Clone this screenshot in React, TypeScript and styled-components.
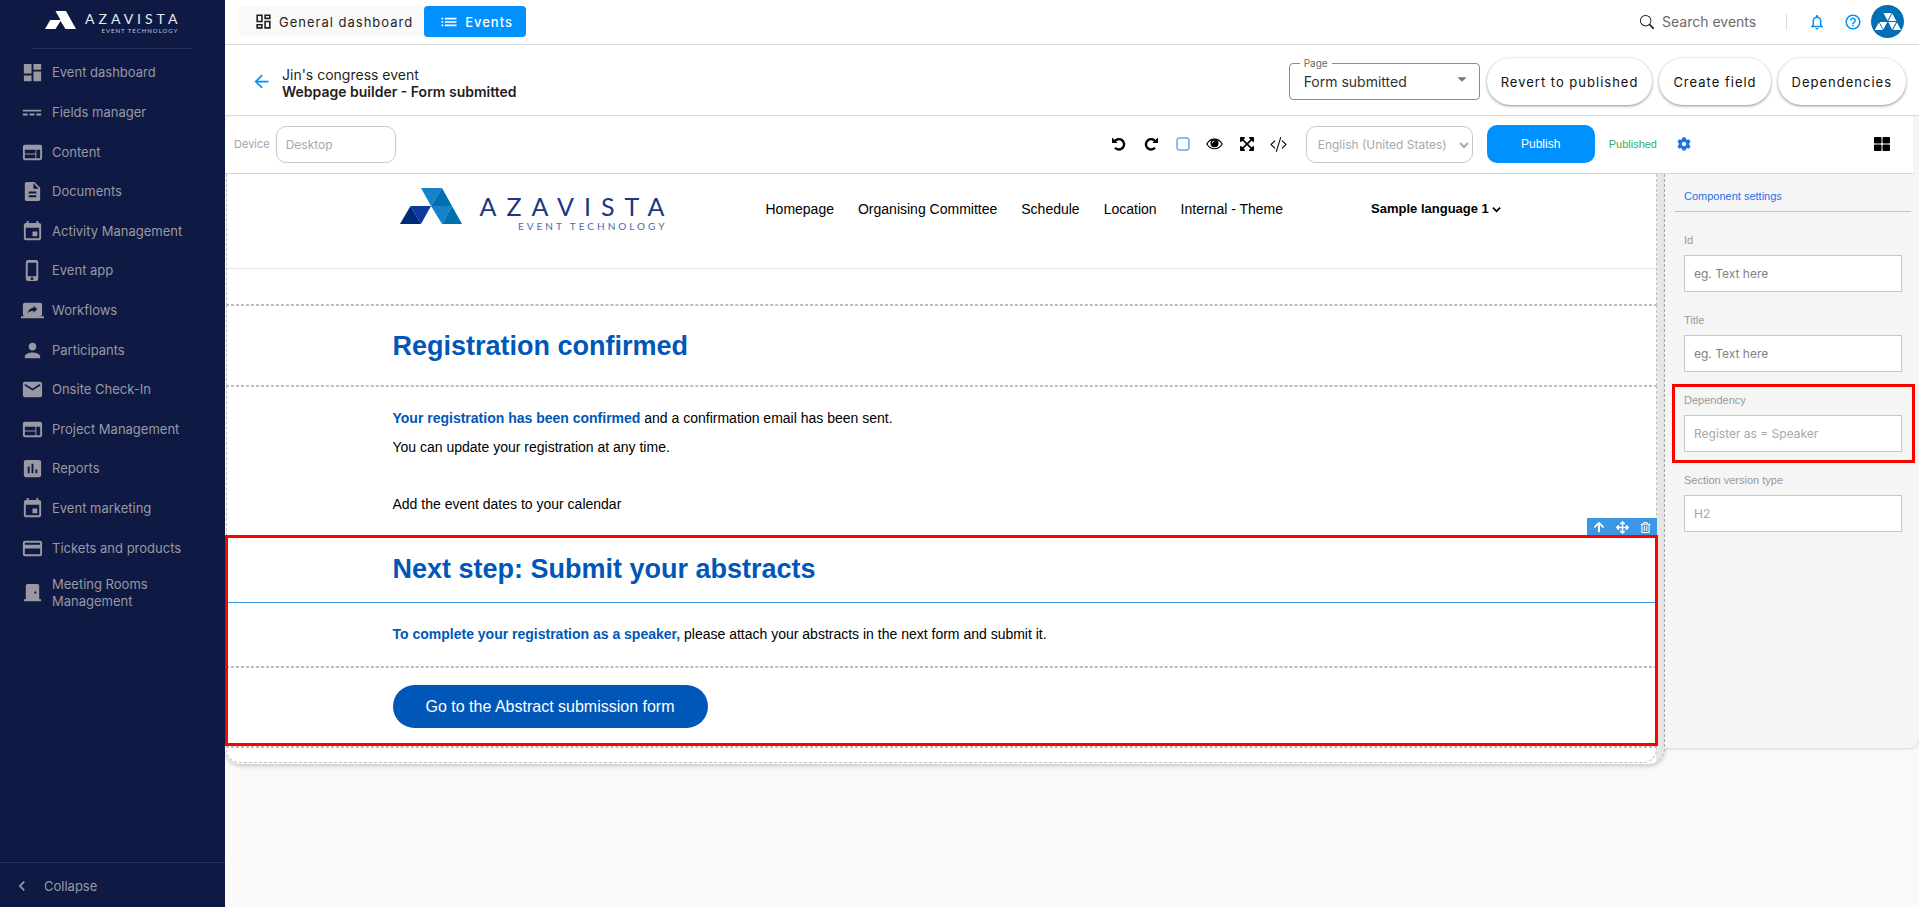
import React from 'react';
import styled, { createGlobalStyle } from 'styled-components';
import {
  MdDashboard,
  MdPowerInput,
  MdWeb,
  MdDescription,
  MdEvent,
  MdPhoneIphone,
  MdScreenShare,
  MdPerson,
  MdEmail,
  MdAssessment,
  MdCreditCard,
  MdChevronLeft,
  MdOutlineDashboard,
  MdList,
  MdArrowBack,
  MdArrowDropDown,
  MdNotificationsNone,
  MdHelpOutline,
} from 'react-icons/md';
import { FaCog, FaThLarge, FaArrowUp, FaArrowsAlt, FaExpandArrowsAlt, FaRegTrashAlt } from 'react-icons/fa';
import { BsSearch, BsCodeSlash } from 'react-icons/bs';

const GlobalStyle = createGlobalStyle`
  * { box-sizing: border-box; }
  body {
    margin: 0;
    background: #f9f9f9;
    font-family: Inter, "Liberation Sans", sans-serif;
    color: #1f1f1f;
  }
  button, input, select { font: inherit; color: inherit; margin: 0; }
  h2, p, ul { margin: 0; padding: 0; }
  a { color: inherit; text-decoration: none; }
  svg { display: block; flex: none; }
`;

const Shell = styled.div`
  display: flex;
  min-height: 100vh;
`;

/* Sidebar */

const Sidebar = styled.aside`
  display: flex;
  flex-direction: column;
  flex: none;
  width: 225px;
  background: #0e1a43;
  color: #9a98a3;
`;

const Brand = styled.a`
  display: flex;
  gap: 9px;
  margin: 0 32px;
  padding: 11px 0 0 13px;
  height: 49px;
  border-bottom: 1px solid #232f5b;
  color: #fff;
`;

const BrandText = styled.span<{ $large?: boolean }>`
  display: flex;
  flex-direction: column;
  align-items: flex-end;
  font-family: Lato, sans-serif;
  color: ${(p) => (p.$large ? '#1b3884' : '#e6e8f0')};
`;

const BrandName = styled.span<{ $large?: boolean }>`
  font-size: ${(p) => (p.$large ? 25 : 14)}px;
  line-height: ${(p) => (p.$large ? 28 : 16)}px;
  letter-spacing: ${(p) => (p.$large ? 10 : 4)}px;
  margin-right: -${(p) => (p.$large ? 10 : 4)}px;
`;

const BrandTag = styled.span<{ $large?: boolean }>`
  font-size: ${(p) => (p.$large ? 10 : 6)}px;
  line-height: ${(p) => (p.$large ? 12 : 8)}px;
  letter-spacing: ${(p) => (p.$large ? 3 : 1)}px;
  margin-right: -${(p) => (p.$large ? 3 : 1)}px;
  color: ${(p) => (p.$large ? '#4a68b0' : '#c3c8da')};
`;

const NavList = styled.ul`
  display: grid;
  grid-template-rows: repeat(13, 1fr) auto;
  min-height: 567px;
  margin-top: 4px;
  list-style: none;
`;

const NavItem = styled.li`
  display: flex;
  align-items: center;
`;

const NavLink = styled.a`
  display: flex;
  align-items: center;
  gap: 8px;
  width: 170px;
  margin-left: 21px;
  font-size: 13px;
  line-height: 17px;

  &[data-tall] { padding: 8px 0 10px; }
`;

const Collapse = styled.button`
  display: flex;
  align-items: center;
  gap: 12px;
  margin-top: auto;
  height: 45px;
  padding: 2px 12px 0;
  border: 0;
  border-top: 1px solid #232f5b;
  background: none;
  font-size: 13px;
`;

/* Top bar */

const Main = styled.div`
  flex: 1;
  min-width: 0;
`;

const TopBar = styled.header`
  display: flex;
  align-items: center;
  justify-content: space-between;
  height: 45px;
  padding: 0 15px 1px 14px;
  border-bottom: 1px solid #dcdcdc;
  background: #fff;
`;

const Tabs = styled.nav`
  display: flex;
  border-radius: 4px;
  background: #f9f9f9;
`;

const Tab = styled.a<{ $active?: boolean }>`
  display: flex;
  align-items: center;
  gap: 6px;
  height: 31px;
  padding: 0 ${(p) => (p.$active ? 13 : 11)}px 0 15px;
  border-radius: 4px;
  background: ${(p) => (p.$active ? '#0091ff' : 'transparent')};
  color: ${(p) => (p.$active ? '#fff' : '#1f1f1f')};
  font-size: 13px;
  font-weight: ${(p) => (p.$active ? 500 : 400)};
  letter-spacing: 1px;
`;

const TopTools = styled.div`
  display: flex;
  align-items: center;
  color: #0091ff;
`;

const Search = styled.label`
  display: flex;
  align-items: center;
  gap: 8px;
  margin-right: 12px;
  color: #1f1f1f;
`;

const SearchInput = styled.input`
  width: 125px;
  padding: 0;
  border: 0;
  border-right: 1px solid #dcdcdc;
  background: none;
  font-size: 14px;
  line-height: 16px;
  outline: none;
  &::placeholder { color: #6b6b6b; opacity: 1; }
`;

const IconButton = styled.button`
  display: grid;
  place-items: center;
  width: 36px;
  height: 36px;
  padding: 0;
  border: 0;
  background: none;
`;

const ProfileButton = styled(IconButton)`
  width: 33px;
  height: 33px;
  border-radius: 50%;
  background: #006fb3;
`;

/* Page heading row */

const PageBar = styled.div`
  display: flex;
  align-items: center;
  height: 71px;
  padding: 0 13px 1px 26px;
  border-bottom: 1px solid #dcdcdc;
  background: #fff;
`;

const BackLink = styled.a`
  margin: 4px 10px 0 0;
  color: #0091ff;
`;

const Heading = styled.div`
  margin-top: 6px;
  font-size: 14px;
  line-height: 17px;
`;

const HeadingTitle = styled.div`
  font-weight: 600;
`;

const PageActions = styled.div`
  display: flex;
  align-items: center;
  gap: 7px;
  margin-left: auto;
  padding-top: 4px;
`;

const PageSelectBox = styled.div`
  position: relative;
  color: #333;
`;

const PageSelectLabel = styled.label`
  position: absolute;
  top: -6px;
  left: 11px;
  padding: 0 4px;
  background: #fff;
  color: #666;
  font-size: 10px;
  line-height: 12px;
`;

const PageSelect = styled.select`
  appearance: none;
  display: block;
  width: 191px;
  height: 37px;
  padding: 0 32px 0 14px;
  border: 1px solid #8c8c8c;
  border-radius: 4px;
  background: #fff;
  font-size: 14px;
`;

const SelectArrow = styled.span`
  position: absolute;
  right: 7px;
  top: 5px;
  color: #757575;
  pointer-events: none;
`;

const PillButton = styled.button`
  height: 47px;
  padding: 0 14px;
  border: 0;
  border-radius: 24px;
  background: #fff;
  box-shadow: 0 1px 3px rgba(0, 0, 0, 0.45);
  font-size: 13px;
  letter-spacing: 1px;
  color: #111;
`;

/* Builder */

const Builder = styled.div`
  background: #f5f5f5;
`;

const Toolbar = styled.div`
  display: flex;
  align-items: center;
  height: 58px;
  margin-right: 6px;
  padding: 0 17px 1px 9px;
  border-bottom: 1px solid #dcdcdc;
  border-top-left-radius: 10px;
  background: #fff;
`;

const DeviceLabel = styled.label`
  display: flex;
  align-items: center;
  gap: 6px;
  color: #a3a3a3;
  font-size: 11px;
`;

const DeviceInput = styled.input`
  width: 120px;
  height: 37px;
  padding: 0 9px;
  border: 1px solid #c8c8c8;
  border-radius: 10px;
  background: #fff;
  color: #a8a8a8;
  font-size: 12px;
`;

const ToolGroup = styled.div`
  display: flex;
  align-items: center;
  margin-left: auto;
`;

const EditTools = styled.div`
  display: flex;
  gap: 4px;
`;

const ToolButton = styled.button<{ $color?: string }>`
  display: grid;
  place-items: center;
  width: 28px;
  height: 28px;
  padding: 0;
  border: 0;
  background: none;
  color: ${(p) => p.$color ?? '#000'};
`;

const LanguageBox = styled.div`
  position: relative;
  margin: 0 14px 0 13px;
  color: #a8a8a8;
`;

const LanguageSelect = styled.select`
  appearance: none;
  display: block;
  width: 167px;
  height: 37px;
  padding: 0 20px 0 11px;
  border: 1px solid #c8c8c8;
  border-radius: 10px;
  background: #fff;
  font-size: 12px;
`;

const LanguageArrow = styled.span`
  position: absolute;
  right: 4px;
  top: 14px;
  pointer-events: none;
`;

const PublishButton = styled.button`
  width: 108px;
  height: 38px;
  border: 0;
  border-radius: 10px;
  background: #0091ff;
  color: #fff;
  font-family: "Liberation Sans", sans-serif;
  font-size: 12px;
`;

const Status = styled.span`
  margin: 0 13px 0 14px;
  color: #2fae5f;
  font-family: "Liberation Sans", sans-serif;
  font-size: 11px;
`;

const GridButton = styled(ToolButton)`
  margin-left: 170px;
`;

const Workspace = styled.div`
  display: flex;
  align-items: flex-start;
  background: #f9f9f9;
`;

const Canvas = styled.main`
  flex: 1;
  min-width: 0;
  padding: 0 7px 1px 1px;
  border-right: 1px dashed #b0b0b0;
  border-radius: 0 0 16px 16px;
  background: linear-gradient(to left, #e6e6e6 8px, #fff 8px);
  box-shadow: 0 2px 4px rgba(0, 0, 0, 0.2);
  font-family: "Liberation Sans", Arial, sans-serif;
  font-size: 14px;
  color: #000;
`;

const Section = styled.section<{ $top?: number; $bottom?: number; $selected?: boolean }>`
  padding: ${(p) => p.$top ?? 0}px 0 ${(p) => p.$bottom ?? 0}px;
  border: 1px dashed #bdbdbd;
  border-bottom: 1px ${(p) => (p.$selected ? 'solid #3b97e3' : 'dashed #bdbdbd')};
  background: #fff;
`;

const FollowingSection = styled(Section)`
  border-top: 0;
`;

const HeaderSection = styled(Section)`
  border-top: 0;
  padding-bottom: 35px;
`;

const LastSection = styled(Section)`
  min-height: 16px;
  border-radius: 0 0 14px 14px;
`;

const Container = styled.div`
  width: 100%;
  max-width: 1098px;
  margin: 0 auto;
`;

const SiteHeader = styled.div`
  height: 95px;
  border-bottom: 1px solid #e6e6e6;
`;

const SiteHeaderRow = styled(Container)`
  display: flex;
  align-items: flex-start;
  padding: 14px 0 0 7px;
`;

const SiteLogo = styled.a`
  display: flex;
  gap: 18px;
  width: 266px;
  margin-right: 101px;

  ${BrandText} { padding-top: 4px; }
`;

const SiteNav = styled.nav`
  display: flex;
  gap: 24px;
  padding-top: 13px;
  line-height: 16px;
  white-space: nowrap;
`;

const LanguageButton = styled.button`
  display: flex;
  align-items: center;
  gap: 3px;
  margin: 13px 0 0 88px;
  padding: 0;
  border: 0;
  background: none;
  font-size: 13px;
  font-weight: 700;
  line-height: 16px;
  white-space: nowrap;
`;

const Title = styled.h2`
  color: #0057b8;
  font-size: 27px;
  line-height: 36px;
`;

const Copy = styled.p<{ $spaced?: boolean }>`
  margin-top: ${(p) => (p.$spaced ? 28 : 0)}px;
  line-height: 29px;
`;

const Accent = styled.strong`
  color: #0057b8;
`;

const FormLink = styled.a`
  display: inline-flex;
  align-items: center;
  height: 43px;
  padding: 0 33px;
  border-radius: 22px;
  background: #0057b8;
  color: #fff;
  font-size: 16px;
  vertical-align: top;
`;

const Highlighted = styled.div`
  position: relative;

  &::after {
    content: '';
    position: absolute;
    inset: -1px -1px 1px -1px;
    border: 3px solid #f00;
    pointer-events: none;
  }
`;

const SectionTools = styled.div`
  position: absolute;
  right: 0;
  top: -18px;
  display: flex;
  align-items: center;
  justify-content: space-between;
  width: 70px;
  height: 18px;
  padding: 0 6px;
  background: #3b97e3;
`;

const SectionTool = styled.button`
  padding: 0;
  border: 0;
  background: none;
  color: #fff;
`;

const SettingsPanel = styled.aside`
  flex: none;
  width: 254px;
  min-height: 574px;
  padding: 0 8px 0 10px;
  border-radius: 0 0 10px 0;
  background: #f5f5f5;
  box-shadow: 0 1px 3px rgba(0, 0, 0, 0.15);
`;

const PanelTitle = styled.div`
  height: 38px;
  padding: 15px 9px 0;
  border-bottom: 1px solid #c4c4c4;
  color: #1a73e8;
  font-family: "Liberation Sans", sans-serif;
  font-size: 11px;
  line-height: 14px;
`;

const Field = styled.label`
  position: relative;
  display: block;
  height: 80px;
  padding: 10px 9px 0;
  color: #999;
  font-family: "Liberation Sans", sans-serif;
  font-size: 11px;
  line-height: 14px;

  ${PanelTitle} + & { margin-top: 11px; }
`;

const FieldInput = styled.input`
  display: block;
  width: 100%;
  height: 37px;
  margin-top: 8px;
  padding: 0 9px;
  border: 1px solid #c8c8c8;
  background: #fff;
  color: #a8a8a8;
  font-family: Inter, sans-serif;
  font-size: 12px;
  &::placeholder { color: #808080; opacity: 1; }
`;

const FieldMark = styled.span`
  position: absolute;
  inset: 1px -4px 0 -3px;
  border: 3px solid #f00;
  pointer-events: none;
`;

const LogoMark = ({ width, height, mono }: { width: number; height: number; mono?: boolean }) => {
  const c = mono ? ['#fff', '#fff', '#fff', '#fff'] : ['#1583c9', '#006fb0', '#0c3a9c', '#002a7b'];
  return (
    <svg width={width} height={height} viewBox="0 0 62 36" preserveAspectRatio="none" aria-hidden="true">
      {mono ? (
        <path fill={c[0]} d="M21 0h21l20 36H41L31 20 21 36H0l10.500-18H31z" />
      ) : (
        <>
          <path fill={c[0]} d="M21 0h21L31 18zM31 18h21l-10 18z" />
          <path fill={c[1]} d="M42 0l10 18H31zM52 18l10 18H42z" />
          <path fill={c[2]} d="M10.500 18H31L21 36z" />
          <path fill={c[3]} d="M0 36l10.500-18L21 36z" />
        </>
      )}
    </svg>
  );
};

const AvatarMark = () => (
  <svg width="28" height="18" viewBox="0 0 28 18" fill="#fff" aria-hidden="true">
    <path d="M9.500 0h8l-4 7.500zM18.300.5l4 7.500h-8zM14.300 9h7.800l-4 7.500zM23 9.500l4 7.500h-8zM5.500 9h7.800l-4 7.500zM4.800 9.500l4 7.500H.8z" />
  </svg>
);

const DoorIcon = () => (
  <svg width="23" height="23" viewBox="0 0 24 24" fill="currentColor" aria-hidden="true">
    <path fillRule="evenodd" d="M7 3h10a2 2 0 0 1 2 2v14h2v2H3v-2h2V5a2 2 0 0 1 2-2zm7 8v2h2v-2z" />
  </svg>
);

const TurnIcon = ({ forward }: { forward?: boolean }) => (
  <svg width="14" height="14" viewBox="0 0 14 14" aria-hidden="true">
    <g transform={forward ? 'matrix(-1 0 0 1 14 0)' : undefined}>
      <path d="M2.500 4.600A5.200 5.200 0 1 1 3 10.800" fill="none" stroke="currentColor" strokeWidth="2.400" />
      <path d="M0 .6V6h5.600z" fill="currentColor" />
    </g>
  </svg>
);

const EyeIcon = () => (
  <svg width="17" height="12" viewBox="0 0 17 12" aria-hidden="true">
    <path d="M.8 6C4.500-.6 12.500-.6 16.200 6 12.500 12.300 4.500 12.300.8 6z" fill="none" stroke="currentColor" strokeWidth="1.200" />
    <circle cx="8.500" cy="5.300" r="4" fill="currentColor" />
    <path d="M6.300 5.200a2.200 2.200 0 0 1 2.200-2.200" fill="none" stroke="#fff" strokeWidth=".9" />
  </svg>
);

const Chevron = ({ width }: { width: number }) => (
  <svg width={width} height={width} viewBox="0 0 10 10" fill="none" stroke="currentColor" strokeWidth="2" aria-hidden="true">
    <path d="M1 3l4 4 4-4" />
  </svg>
);

const navItems = [
  { label: 'Event dashboard', icon: <MdDashboard size={23} /> },
  { label: 'Fields manager', icon: <MdPowerInput size={23} /> },
  { label: 'Content', icon: <MdWeb size={23} /> },
  { label: 'Documents', icon: <MdDescription size={23} /> },
  { label: 'Activity Management', icon: <MdEvent size={23} /> },
  { label: 'Event app', icon: <MdPhoneIphone size={23} /> },
  { label: 'Workflows', icon: <MdScreenShare size={23} /> },
  { label: 'Participants', icon: <MdPerson size={23} /> },
  { label: 'Onsite Check-In', icon: <MdEmail size={23} /> },
  { label: 'Project Management', icon: <MdWeb size={23} /> },
  { label: 'Reports', icon: <MdAssessment size={23} /> },
  { label: 'Event marketing', icon: <MdEvent size={23} /> },
  { label: 'Tickets and products', icon: <MdCreditCard size={23} /> },
  { label: 'Meeting Rooms Management', icon: <DoorIcon />, tall: true },
];

const siteLinks = ['Homepage', 'Organising Committee', 'Schedule', 'Location', 'Internal - Theme'];

export default function App() {
  return (
    <>
      <GlobalStyle />
      <Shell>
        <Sidebar>
          <Brand href="#">
            <LogoMark width={31} height={18} mono />
            <BrandText>
              <BrandName>AZAVISTA</BrandName>
              <BrandTag>EVENT TECHNOLOGY</BrandTag>
            </BrandText>
          </Brand>
          <NavList>
            {navItems.map((item) => (
              <NavItem key={item.label}>
                <NavLink href="#" data-tall={item.tall || undefined}>
                  {item.icon}
                  <span>{item.label}</span>
                </NavLink>
              </NavItem>
            ))}
          </NavList>
          <Collapse type="button">
            <MdChevronLeft size={20} />
            Collapse
          </Collapse>
        </Sidebar>

        <Main>
          <TopBar>
            <Tabs>
              <Tab href="#">
                <MdOutlineDashboard size={19} />
                General dashboard
              </Tab>
              <Tab href="#" $active>
                <MdList size={20} />
                Events
              </Tab>
            </Tabs>
            <TopTools>
              <Search>
                <BsSearch size={14} />
                <SearchInput type="text" aria-label="Search events" placeholder="Search events" />
              </Search>
              <IconButton type="button" aria-label="Notifications">
                <MdNotificationsNone size={18} />
              </IconButton>
              <IconButton type="button" aria-label="Help">
                <MdHelpOutline size={18} />
              </IconButton>
              <ProfileButton type="button" aria-label="Profile">
                <AvatarMark />
              </ProfileButton>
            </TopTools>
          </TopBar>

          <PageBar>
            <BackLink href="#" aria-label="Back">
              <MdArrowBack size={21} />
            </BackLink>
            <Heading>
              <div>Jin's congress event</div>
              <HeadingTitle>Webpage builder - Form submitted</HeadingTitle>
            </Heading>
            <PageActions>
              <PageSelectBox>
                <PageSelectLabel htmlFor="page">Page</PageSelectLabel>
                <PageSelect id="page">
                  <option>Form submitted</option>
                </PageSelect>
                <SelectArrow>
                  <MdArrowDropDown size={22} />
                </SelectArrow>
              </PageSelectBox>
              <PillButton type="button">Revert to published</PillButton>
              <PillButton type="button">Create field</PillButton>
              <PillButton type="button">Dependencies</PillButton>
            </PageActions>
          </PageBar>

          <Builder>
            <Toolbar>
              <DeviceLabel>
                Device
                <DeviceInput type="text" defaultValue="Desktop" />
              </DeviceLabel>
              <ToolGroup>
                <EditTools>
                  <ToolButton type="button" aria-label="Undo">
                    <TurnIcon />
                  </ToolButton>
                  <ToolButton type="button" aria-label="Redo">
                    <TurnIcon forward />
                  </ToolButton>
                  <ToolButton type="button" aria-label="Outline" $color="#1a73ff">
                    <svg width="14" height="14" viewBox="0 0 14 14" fill="none" stroke="currentColor">
                      <rect x="1" y="1" width="12" height="12" rx="2" />
                    </svg>
                  </ToolButton>
                  <ToolButton type="button" aria-label="Preview">
                    <EyeIcon />
                  </ToolButton>
                  <ToolButton type="button" aria-label="Full screen">
                    <FaExpandArrowsAlt size={16} />
                  </ToolButton>
                  <ToolButton type="button" aria-label="Code">
                    <BsCodeSlash size={17} />
                  </ToolButton>
                </EditTools>
                <LanguageBox>
                  <LanguageSelect aria-label="Language">
                    <option>English (United States)</option>
                  </LanguageSelect>
                  <LanguageArrow>
                    <Chevron width={10} />
                  </LanguageArrow>
                </LanguageBox>
                <PublishButton type="button">Publish</PublishButton>
                <Status>Published</Status>
                <ToolButton type="button" aria-label="Settings" $color="#1a73e8">
                  <FaCog size={14} />
                </ToolButton>
                <GridButton type="button" aria-label="Blocks">
                  <FaThLarge size={16} />
                </GridButton>
              </ToolGroup>
            </Toolbar>
            <Workspace>
              <Canvas>
                <HeaderSection>
                  <SiteHeader>
                    <SiteHeaderRow>
                      <SiteLogo href="#">
                        <LogoMark width={62} height={36} />
                        <BrandText $large>
                          <BrandName $large>AZAVISTA</BrandName>
                          <BrandTag $large>EVENT TECHNOLOGY</BrandTag>
                        </BrandText>
                      </SiteLogo>
                      <SiteNav>
                        {siteLinks.map((link) => (
                          <a key={link} href="#">
                            {link}
                          </a>
                        ))}
                      </SiteNav>
                      <LanguageButton type="button">
                        Sample language 1
                        <Chevron width={9} />
                      </LanguageButton>
                    </SiteHeaderRow>
                  </SiteHeader>
                </HeaderSection>
                <Section $top={22} $bottom={21}>
                  <Container>
                    <Title>Registration confirmed</Title>
                  </Container>
                </Section>
                <Section $top={17} $bottom={16}>
                  <Container>
                    <Copy>
                      <Accent>Your registration has been confirmed</Accent> and a confirmation email has been sent.
                    </Copy>
                    <Copy>You can update your registration at any time.</Copy>
                    <Copy $spaced>Add the event dates to your calendar</Copy>
                  </Container>
                </Section>
                <Highlighted>
                  <SectionTools>
                    <SectionTool type="button" aria-label="Select parent">
                      <FaArrowUp size={12} />
                    </SectionTool>
                    <SectionTool type="button" aria-label="Move">
                      <FaArrowsAlt size={13} />
                    </SectionTool>
                    <SectionTool type="button" aria-label="Delete">
                      <FaRegTrashAlt size={11} />
                    </SectionTool>
                  </SectionTools>
                  <Section $top={14} $bottom={15} $selected>
                    <Container>
                      <Title>Next step: Submit your abstracts</Title>
                    </Container>
                  </Section>
                  <FollowingSection $top={17} $bottom={17}>
                    <Container>
                      <Copy>
                        <Accent>To complete your registration as a speaker,</Accent> please attach your abstracts in the
                        next form and submit it.
                      </Copy>
                    </Container>
                  </FollowingSection>
                  <Section $top={17} $bottom={18}>
                    <Container>
                      <FormLink href="#">Go to the Abstract submission form</FormLink>
                    </Container>
                  </Section>
                </Highlighted>
                <LastSection />
              </Canvas>
              <SettingsPanel>
                <PanelTitle>Component settings</PanelTitle>
                <Field>
                  Id
                  <FieldInput type="text" placeholder="eg. Text here" />
                </Field>
                <Field>
                  Title
                  <FieldInput type="text" placeholder="eg. Text here" />
                </Field>
                <Field>
                  Dependency
                  <FieldInput type="text" defaultValue="Register as = Speaker" />
                  <FieldMark />
                </Field>
                <Field>
                  Section version type
                  <FieldInput type="text" defaultValue="H2" />
                </Field>
              </SettingsPanel>
            </Workspace>
          </Builder>
        </Main>
      </Shell>
    </>
  );
}
